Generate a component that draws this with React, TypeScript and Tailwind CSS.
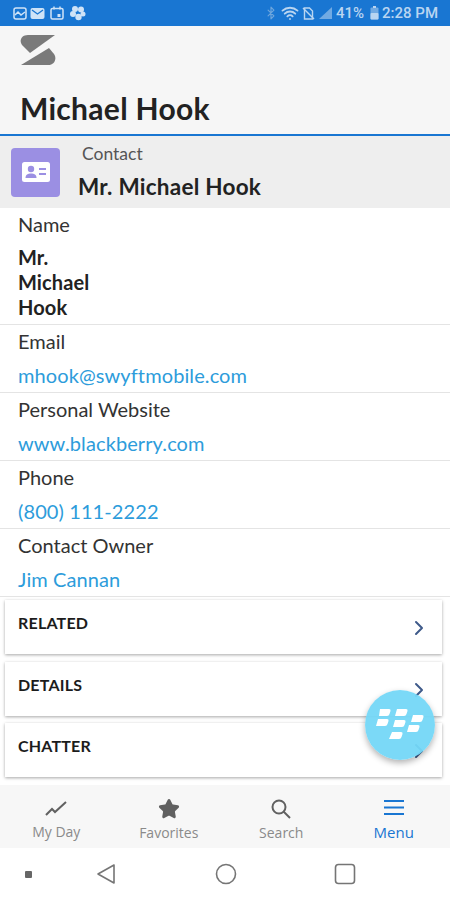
import React from 'react';
import { ChevronRight, Star, Bluetooth, Wifi } from 'lucide-react';

const fields = [
  { label: 'Email', value: 'mhook@swyftmobile.com' },
  { label: 'Personal Website', value: 'www.blackberry.com' },
  { label: 'Phone', value: '(800) 111-2222' },
  { label: 'Contact Owner', value: 'Jim Cannan' },
];

const StatusIcons = () => (
  <div className="flex items-center gap-[3px] text-[#cfe3f7]">
    <svg width="14" height="13" viewBox="0 0 14 13" fill="none" stroke="currentColor" strokeWidth="1.5">
      <rect x="1" y="1" width="12" height="11" rx="2" />
      <path d="M2 8l3-3 3 3 4-3" />
    </svg>
    <svg width="15" height="13" viewBox="0 0 15 13" fill="currentColor">
      <rect x="0.5" y="1" width="14" height="11" rx="2" />
      <path d="M2 3l5.5 4L13 3" fill="none" stroke="#1976d2" strokeWidth="1.3" />
    </svg>
    <svg width="14" height="14" viewBox="0 0 14 14" fill="none" stroke="currentColor" strokeWidth="1.5" className="ml-[2px]">
      <rect x="1" y="2.5" width="12" height="10.5" rx="1.5" />
      <path d="M4 0.5v3M10 0.5v3" />
      <rect x="7.5" y="8" width="3" height="3" fill="currentColor" stroke="none" />
    </svg>
    <svg width="17" height="16" viewBox="0 0 17 16" fill="currentColor" className="ml-[2px]">
      <circle cx="6" cy="4" r="3" />
      <circle cx="12" cy="4.5" r="3" />
      <circle cx="4" cy="9" r="3" />
      <circle cx="14" cy="9" r="2.5" />
      <circle cx="9.5" cy="12" r="3.2" />
    </svg>
  </div>
);

const BlackberryMark = () => (
  <svg width="48" height="34" viewBox="0 0 48 34" fill="#ffffff">
    <path d="M4 1h9q2 0 1.500 2l-1 3q-.5 2-2.500 2H3z" />
    <path d="M21 1h9q2 0 1.500 2l-1 3q-.5 2-2.500 2h-9z" />
    <path d="M37 7h9q2 0 1.500 2l-1 3q-.5 2-2.500 2h-9z" />
    <path d="M2 11h9q2 0 1.500 2l-1 3q-.5 2-2.500 2H0z" />
    <path d="M19 12h9q2 0 1.500 2l-1 3q-.5 2-2.500 2h-9z" />
    <path d="M33 17h9q2 0 1.500 2l-1 3q-.5 2-2.500 2h-9z" />
    <path d="M16 24h9q2 0 1.500 2l-1 3q-.5 2-2.500 2h-10z" />
  </svg>
);

export default function App() {
  return (
    <div className="relative flex h-[900px] w-[450px] flex-col overflow-hidden bg-white font-['Lato',sans-serif]">
      {/* Status bar */}
      <div className="flex h-[26px] flex-none items-center justify-between bg-[#1976d2] pl-[13px] pr-[12px]">
        <StatusIcons />
        <div className="flex items-center gap-[3px] text-[#b9d5f1]">
          <Bluetooth className="h-[14px] w-[14px] text-[#6ea6dd]" strokeWidth={2} />
          <Wifi className="h-[18px] w-[18px]" strokeWidth={2.5} />
          <svg width="13" height="13" viewBox="0 0 13 13" fill="none" stroke="currentColor" strokeWidth="1.4">
            <path d="M2.500 1h5l3 3v8h-8z" />
            <path d="M1 1l11 11" />
          </svg>
          <svg width="15" height="14" viewBox="0 0 15 14" fill="currentColor">
            <path d="M14 1v12H1z" opacity="0.55" />
          </svg>
          <span className="text-[15px] leading-none font-['Roboto',sans-serif] font-medium">41%</span>
          <svg width="9" height="14" viewBox="0 0 9 14" fill="currentColor" className="ml-[3px]">
            <rect x="3" y="0" width="3" height="2" />
            <rect x="0.500" y="1.500" width="8" height="12" rx="1" opacity="0.55" />
            <rect x="0.500" y="7" width="8" height="6.500" rx="1" />
          </svg>
          <span className="text-[15px] leading-none font-['Roboto',sans-serif] font-medium">2:28 PM</span>
        </div>
      </div>

      {/* Header */}
      <div className="flex h-[110px] flex-none flex-col border-b-2 border-[#1976d2] bg-[#f6f6f6] pl-[20px]">
        <svg width="36" height="31" viewBox="0 0 36 31" fill="#7a7a7a" className="mt-[9px]">
          <path d="M35 0H8C1 0-1 6 2 10l8 8z" />
          <path d="M1 30h27c7 0 9-7 6-11l-5-6z" />
        </svg>
        <div className="mt-[23px] text-[30px] leading-[38px] font-bold tracking-[0.3px] text-[#222222]">Michael Hook</div>
      </div>

      {/* Record title */}
      <div className="flex h-[72px] flex-none items-center bg-[#eeeeee] pl-[11px]">
        <div className="flex h-[49px] w-[49px] flex-none items-center justify-center rounded-[4px] bg-[#9b8fe3]">
          <svg width="28" height="20" viewBox="0 0 28 20" fill="#ffffff">
            <rect width="28" height="20" rx="2.500" />
            <circle cx="9" cy="7" r="3.200" fill="#9b8fe3" />
            <path d="M3.500 16c0-3.500 2.500-4.500 5.500-4.500s5.500 1 5.500 4.500z" fill="#9b8fe3" />
            <rect x="17" y="6" width="7" height="2" fill="#9b8fe3" />
            <rect x="17" y="11" width="7" height="2" fill="#9b8fe3" />
          </svg>
        </div>
        <div className="ml-[18px] flex flex-col">
          <div className="ml-[4px] -mt-[1px] text-[17.500px] leading-[22px] text-[#555555]">Contact</div>
          <div className="mt-[8px] text-[22.500px] leading-[28px] font-bold tracking-[0.25px] text-[#222222]">Mr. Michael Hook</div>
        </div>
      </div>

      {/* Fields */}
      <div className="flex h-[117px] flex-none flex-col border-b border-[#e4e4e4] pl-[18px]">
        <div className="mt-[4px] text-[20px] leading-[24px] text-[#333333]">Name</div>
        <div className="mt-[9px] text-[20px] leading-[25px] font-bold tracking-[0.1px] text-[#222222]">
          <div>Mr.</div>
          <div>Michael</div>
          <div>Hook</div>
        </div>
      </div>
      {fields.map((f) => (
        <div key={f.label} className="flex h-[68px] flex-none flex-col border-b border-[#e4e4e4] pl-[18px]">
          <div className="mt-[4px] text-[20px] leading-[24px] text-[#333333]">{f.label}</div>
          <div className="mt-[10px] text-[20px] leading-[24px] tracking-[0.1px] text-[#2d9cdb]">{f.value}</div>
        </div>
      ))}

      {/* Related lists */}
      <div className="flex flex-none flex-col gap-[7.500px] pl-[5px] pr-[8px] pt-[3px]">
        {['RELATED', 'DETAILS', 'CHATTER'].map((t) => (
          <div
            key={t}
            className="flex h-[54px] items-start justify-between bg-white pl-[13px] pr-[14px] shadow-[0_1px_3px_rgba(0,0,0,0.35)]"
          >
            <span className="mt-[13px] text-[16px] leading-[20px] font-bold tracking-[0.2px] text-[#1c1c1c]">{t}</span>
            <ChevronRight className="mt-[16px] -mr-[3px] h-[24px] w-[24px] text-[#3f5a8a]" strokeWidth={2} />
          </div>
        ))}
      </div>

      {/* Bottom tabs */}
      <div className="absolute bottom-[52px] left-0 right-0 grid h-[63px] grid-cols-4 bg-[#f7f7f7] font-['Open_Sans',sans-serif]">
        <div className="flex flex-col items-center pt-[15px] text-[#8a8a8a]">
          <svg width="24" height="18" viewBox="0 0 24 18" fill="none" stroke="#616161" strokeWidth="2">
            <path d="M2 15l6-6 3 3L22 2" />
          </svg>
          <span className="mt-[4px] text-[14px] leading-[20px]">My Day</span>
        </div>
        <div className="flex flex-col items-center pt-[13px] text-[#8a8a8a]">
          <Star className="h-[22px] w-[22px] fill-[#616161] text-[#616161]" />
          <span className="mt-[3px] text-[14px] leading-[20px]">Favorites</span>
        </div>
        <div className="flex flex-col items-center pt-[13px] text-[#8a8a8a]">
          <svg width="22" height="22" viewBox="0 0 22 22" fill="none" stroke="#616161" strokeWidth="2">
            <circle cx="9" cy="9" r="6.500" />
            <path d="M13.500 13.500L20 20" />
          </svg>
          <span className="mt-[3px] text-[14px] leading-[20px]">Search</span>
        </div>
        <div className="flex flex-col items-center pt-[12px] text-[#1976d2]">
          <svg width="22" height="22" viewBox="0 0 22 22" fill="none" stroke="currentColor" strokeWidth="2">
            <path d="M1 4h20M1 10.500h20M1 17h20" />
          </svg>
          <span className="mt-[3px] text-[15px] leading-[20px]">Menu</span>
        </div>
      </div>

      {/* Android navigation */}
      <div className="absolute bottom-0 left-0 right-0 grid h-[52px] grid-cols-[56px_114px_118px_1fr] items-center bg-white text-[#757575]">
        <div className="ml-[25px] h-[7px] w-[7px] rounded-[1px] bg-[#666666]" />
        <svg width="20" height="22" viewBox="0 0 20 22" fill="none" stroke="currentColor" strokeWidth="1.600" className="ml-[40px]">
          <path d="M18 2v18L2 11z" strokeLinejoin="round" />
        </svg>
        <svg width="22" height="22" viewBox="0 0 22 22" fill="none" stroke="currentColor" strokeWidth="1.600" className="ml-[45px]">
          <circle cx="11" cy="11" r="9.500" />
        </svg>
        <svg width="22" height="22" viewBox="0 0 22 22" fill="none" stroke="currentColor" strokeWidth="1.600" className="ml-[46px]">
          <rect x="1.500" y="1.500" width="19" height="19" rx="3" />
        </svg>
      </div>

      {/* Floating action button */}
      <div className="absolute left-[365px] top-[690px] flex h-[70px] w-[70px] items-center justify-center rounded-full bg-[#74d7f7]/95 shadow-[0_3px_6px_rgba(0,0,0,0.3)]">
        <BlackberryMark />
      </div>
    </div>
  );
}
